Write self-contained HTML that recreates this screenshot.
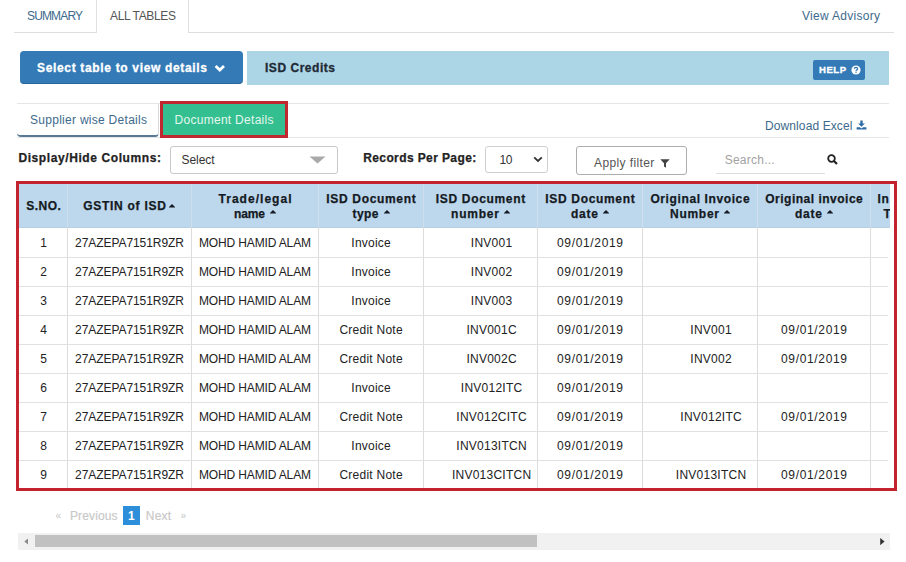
<!DOCTYPE html>
<html><head><meta charset="utf-8"><style>
html,body{margin:0;padding:0;background:#fff;width:906px;height:562px;overflow:hidden;position:relative}
body{font-family:"Liberation Sans",sans-serif}
.t{position:absolute;white-space:nowrap}
.r{position:absolute}
</style></head><body>
<div class="r" style="left:14px;top:32px;width:880px;height:1px;background:#dedede"></div>
<div class="r" style="left:96px;top:0px;width:93px;height:33px;background:#fff;border-left:1px solid #e0e0e0;border-right:1px solid #e0e0e0;box-sizing:border-box"></div>
<div class="t" style="left:27.00px;top:9.34px;font-size:12px;line-height:14px;font-weight:normal;color:#3d6a8c;letter-spacing:-0.850px;">SUMMARY</div>
<div class="t" style="left:110.00px;top:9.34px;font-size:12px;line-height:14px;font-weight:normal;color:#555;letter-spacing:-0.350px;">ALL TABLES</div>
<div class="t" style="left:802.00px;top:9.14px;font-size:12px;line-height:14px;font-weight:normal;color:#3d6a8c;letter-spacing:0.292px;">View Advisory</div>
<div class="r" style="left:20px;top:51px;width:223px;height:33px;background:#337ab7;border-radius:4px;border-bottom:1px solid #2b6496;box-sizing:border-box"></div>
<div class="t" style="left:37.00px;top:60.84px;font-size:12px;line-height:14px;font-weight:bold;color:#fff;letter-spacing:0.665px;-webkit-text-stroke:0.3px #fff;">Select table to view details</div>
<svg class="r" style="left:214px;top:64px" width="12" height="9" viewBox="0 0 12 9"><path d="M1.6 2 L5.8 6.1 L10 2" stroke="#fff" stroke-width="2.8" fill="none"/></svg>
<div class="r" style="left:247px;top:51px;width:642px;height:34px;background:#acd6e5"></div>
<div class="t" style="left:265.00px;top:60.84px;font-size:12px;line-height:14px;font-weight:bold;color:#1e2a36;letter-spacing:0.530px;-webkit-text-stroke:0.3px #1e2a36;">ISD Credits</div>
<div class="r" style="left:813px;top:60px;width:52px;height:20px;background:#337ab7;border-radius:2px"></div>
<div class="t" style="left:819.00px;top:64.21px;font-size:9.5px;line-height:11px;font-weight:bold;color:#fff;letter-spacing:0.550px;-webkit-text-stroke:0.35px #fff;">HELP</div>
<svg class="r" style="left:851px;top:65px" width="10" height="10" viewBox="0 0 10 10"><circle cx="5" cy="5" r="4.6" fill="#fff"/><path d="M3.4 3.9 Q3.5 2.3 5 2.3 Q6.6 2.3 6.6 3.7 Q6.6 4.6 5.6 5 Q5.1 5.3 5.1 6" stroke="#337ab7" stroke-width="1.3" fill="none"/><rect x="4.4" y="6.6" width="1.3" height="1.2" fill="#337ab7"/></svg>
<div class="r" style="left:17px;top:103px;width:872px;height:1px;background:#e6e6e6"></div>
<div class="r" style="left:17px;top:137px;width:872px;height:1px;background:#e6e6e6"></div>
<div class="r" style="left:17px;top:104px;width:142px;height:33px;background:#fff;border-right:1px solid #d8d8d8;border-bottom:2px solid #587a96;border-radius:0 0 4px 4px;box-sizing:border-box"></div>
<div class="t" style="left:30.00px;top:113.14px;font-size:12px;line-height:14px;font-weight:normal;color:#3d6a8c;letter-spacing:0.280px;">Supplier wise Details</div>
<div class="r" style="left:160px;top:101px;width:128px;height:37px;background:#33bf90;border:3px solid #c1272f;box-sizing:border-box"></div>
<div class="t" style="left:174.50px;top:113.14px;font-size:12px;line-height:14px;font-weight:normal;color:#e3f7ee;letter-spacing:0.287px;">Document Details</div>
<div class="t" style="left:765.00px;top:118.84px;font-size:12px;line-height:14px;font-weight:normal;color:#3d6a8c;letter-spacing:0.104px;">Download Excel</div>
<svg class="r" style="left:856px;top:120px" width="11" height="10" viewBox="0 0 11 10"><path d="M4.3 0.6h2.4v3h2.2L5.5 6.8 2.1 3.6h2.2z" fill="#2f6ca6"/><path d="M0.6 7.2h3.3L5.5 8.4 7.1 7.2h3.3v2.4h-9.8z" fill="#2f6ca6"/></svg>
<div class="t" style="left:18.40px;top:150.84px;font-size:12px;line-height:14px;font-weight:bold;color:#222;letter-spacing:0.595px;-webkit-text-stroke:0.25px #222;">Display/Hide Columns:</div>
<div class="r" style="left:170px;top:146px;width:168px;height:28px;background:#fff;border:1px solid #c8c8c8;border-radius:3px;box-sizing:border-box"></div>
<div class="t" style="left:181.50px;top:152.84px;font-size:12px;line-height:14px;font-weight:normal;color:#333;letter-spacing:-0.070px;">Select</div>
<svg class="r" style="left:309px;top:156px" width="17" height="8" viewBox="0 0 17 8"><path d="M0.5 0.5h16L8.5 7.5z" fill="#a9a9a9"/></svg>
<div class="t" style="left:363.20px;top:150.84px;font-size:12px;line-height:14px;font-weight:bold;color:#222;letter-spacing:0.394px;-webkit-text-stroke:0.25px #222;">Records Per Page:</div>
<div class="r" style="left:485px;top:146px;width:63px;height:27px;background:#fff;border:1px solid #cfcfcf;border-radius:3px;box-sizing:border-box"></div>
<div class="t" style="left:499.60px;top:152.84px;font-size:12px;line-height:14px;font-weight:normal;color:#333;letter-spacing:-0.550px;">10</div>
<svg class="r" style="left:533px;top:156px" width="10" height="7" viewBox="0 0 10 7"><path d="M1.2 1.3 L5 5 L8.8 1.3" stroke="#333" stroke-width="1.8" fill="none"/></svg>
<div class="r" style="left:576px;top:146px;width:111px;height:29px;background:#fff;border:1px solid #adadad;border-radius:3px;box-sizing:border-box"></div>
<div class="t" style="left:594.00px;top:155.84px;font-size:12px;line-height:14px;font-weight:normal;color:#555;letter-spacing:0.395px;">Apply filter</div>
<svg class="r" style="left:660px;top:159px" width="10" height="9" viewBox="0 0 10 9"><path d="M0.3 0.3h9.4L6 4.2v4.5L4 7.5V4.2z" fill="#444"/></svg>
<div class="r" style="left:716px;top:173px;width:109px;height:1px;background:#dedede"></div>
<div class="t" style="left:724.70px;top:152.84px;font-size:12px;line-height:14px;font-weight:normal;color:#a2a2a2;letter-spacing:0.244px;">Search...</div>
<svg class="r" style="left:827px;top:153.5px" width="11" height="11" viewBox="0 0 11 11"><circle cx="4.5" cy="4.5" r="3.3" stroke="#222" stroke-width="1.8" fill="none"/><path d="M7 7 L10 10" stroke="#222" stroke-width="2.2"/></svg>
<div class="r" style="left:19px;top:184px;width:871px;height:44px;background:#bdd7ed"></div>
<div class="r" style="left:19px;top:227px;width:871px;height:1px;background:#b6cfe4"></div>
<div class="r" style="left:67px;top:184px;width:1px;height:305px;background:#dcdcdc"></div>
<div class="r" style="left:191px;top:184px;width:1px;height:305px;background:#dcdcdc"></div>
<div class="r" style="left:318px;top:184px;width:1px;height:305px;background:#dcdcdc"></div>
<div class="r" style="left:423px;top:184px;width:1px;height:305px;background:#dcdcdc"></div>
<div class="r" style="left:537px;top:184px;width:1px;height:305px;background:#dcdcdc"></div>
<div class="r" style="left:642px;top:184px;width:1px;height:305px;background:#dcdcdc"></div>
<div class="r" style="left:757px;top:184px;width:1px;height:305px;background:#dcdcdc"></div>
<div class="r" style="left:870px;top:184px;width:1px;height:305px;background:#dcdcdc"></div>
<div class="r" style="left:67px;top:184px;width:1px;height:43px;background:#cfdeec"></div>
<div class="r" style="left:191px;top:184px;width:1px;height:43px;background:#cfdeec"></div>
<div class="r" style="left:318px;top:184px;width:1px;height:43px;background:#cfdeec"></div>
<div class="r" style="left:423px;top:184px;width:1px;height:43px;background:#cfdeec"></div>
<div class="r" style="left:537px;top:184px;width:1px;height:43px;background:#cfdeec"></div>
<div class="r" style="left:642px;top:184px;width:1px;height:43px;background:#cfdeec"></div>
<div class="r" style="left:757px;top:184px;width:1px;height:43px;background:#cfdeec"></div>
<div class="r" style="left:870px;top:184px;width:1px;height:43px;background:#cfdeec"></div>
<div class="r" style="left:19px;top:257px;width:869px;height:1px;background:#e1e1e1"></div>
<div class="r" style="left:19px;top:286px;width:869px;height:1px;background:#e1e1e1"></div>
<div class="r" style="left:19px;top:315px;width:869px;height:1px;background:#e1e1e1"></div>
<div class="r" style="left:19px;top:344px;width:869px;height:1px;background:#e1e1e1"></div>
<div class="r" style="left:19px;top:373px;width:869px;height:1px;background:#e1e1e1"></div>
<div class="r" style="left:19px;top:402px;width:869px;height:1px;background:#e1e1e1"></div>
<div class="r" style="left:19px;top:431px;width:869px;height:1px;background:#e1e1e1"></div>
<div class="r" style="left:19px;top:460px;width:869px;height:1px;background:#e1e1e1"></div>
<div class="t" style="left:-156.24px;top:199.04px;width:400px;text-align:center;font-size:12px;line-height:14px;font-weight:bold;color:#141a22;letter-spacing:0.513px;-webkit-text-stroke:0.25px #141a22;">S.NO.</div>
<div class="t" style="left:-75.13px;top:199.04px;width:400px;text-align:center;font-size:12px;line-height:14px;font-weight:bold;color:#141a22;letter-spacing:0.732px;-webkit-text-stroke:0.25px #141a22;">GSTIN of ISD</div>
<svg class="r" style="left:169px;top:204px" width="6" height="4" viewBox="0 0 6 4"><path d="M-0.3 3.4h6.6L3 0z" fill="#141a22"/></svg>
<div class="t" style="left:55.52px;top:191.84px;width:400px;text-align:center;font-size:12px;line-height:14px;font-weight:bold;color:#141a22;letter-spacing:1.030px;-webkit-text-stroke:0.25px #141a22;">Trade/legal</div>
<div class="t" style="left:171.34px;top:191.84px;width:400px;text-align:center;font-size:12px;line-height:14px;font-weight:bold;color:#141a22;letter-spacing:0.682px;-webkit-text-stroke:0.25px #141a22;">ISD Document</div>
<div class="t" style="left:280.84px;top:191.84px;width:400px;text-align:center;font-size:12px;line-height:14px;font-weight:bold;color:#141a22;letter-spacing:0.682px;-webkit-text-stroke:0.25px #141a22;">ISD Document</div>
<div class="t" style="left:390.34px;top:191.84px;width:400px;text-align:center;font-size:12px;line-height:14px;font-weight:bold;color:#141a22;letter-spacing:0.682px;-webkit-text-stroke:0.25px #141a22;">ISD Document</div>
<div class="t" style="left:500.31px;top:191.84px;width:400px;text-align:center;font-size:12px;line-height:14px;font-weight:bold;color:#141a22;letter-spacing:0.610px;-webkit-text-stroke:0.25px #141a22;">Original Invoice</div>
<div class="t" style="left:614.25px;top:191.84px;width:400px;text-align:center;font-size:12px;line-height:14px;font-weight:bold;color:#141a22;letter-spacing:0.497px;-webkit-text-stroke:0.25px #141a22;">Original invoice</div>
<div class="t" style="left:234.00px;top:207.04px;font-size:12px;line-height:14px;font-weight:bold;color:#141a22;letter-spacing:-0.117px;-webkit-text-stroke:0.25px #141a22;">name</div>
<svg class="r" style="left:270px;top:210px" width="6" height="4" viewBox="0 0 6 4"><path d="M-0.3 3.4h6.6L3 0z" fill="#141a22"/></svg>
<div class="t" style="left:352.50px;top:207.04px;font-size:12px;line-height:14px;font-weight:bold;color:#141a22;letter-spacing:0.433px;-webkit-text-stroke:0.25px #141a22;">type</div>
<svg class="r" style="left:384px;top:210px" width="6" height="4" viewBox="0 0 6 4"><path d="M-0.3 3.4h6.6L3 0z" fill="#141a22"/></svg>
<div class="t" style="left:451.00px;top:207.04px;font-size:12px;line-height:14px;font-weight:bold;color:#141a22;letter-spacing:0.800px;-webkit-text-stroke:0.25px #141a22;">number</div>
<svg class="r" style="left:504px;top:210px" width="6" height="4" viewBox="0 0 6 4"><path d="M-0.3 3.4h6.6L3 0z" fill="#141a22"/></svg>
<div class="t" style="left:571.00px;top:207.04px;font-size:12px;line-height:14px;font-weight:bold;color:#141a22;letter-spacing:0.767px;-webkit-text-stroke:0.25px #141a22;">date</div>
<svg class="r" style="left:603px;top:210px" width="6" height="4" viewBox="0 0 6 4"><path d="M-0.3 3.4h6.6L3 0z" fill="#141a22"/></svg>
<div class="t" style="left:670.00px;top:207.04px;font-size:12px;line-height:14px;font-weight:bold;color:#141a22;letter-spacing:0.730px;-webkit-text-stroke:0.25px #141a22;">Number</div>
<svg class="r" style="left:724px;top:210px" width="6" height="4" viewBox="0 0 6 4"><path d="M-0.3 3.4h6.6L3 0z" fill="#141a22"/></svg>
<div class="t" style="left:795.00px;top:207.04px;font-size:12px;line-height:14px;font-weight:bold;color:#141a22;letter-spacing:0.767px;-webkit-text-stroke:0.25px #141a22;">date</div>
<svg class="r" style="left:827px;top:210px" width="6" height="4" viewBox="0 0 6 4"><path d="M-0.3 3.4h6.6L3 0z" fill="#141a22"/></svg>
<div class="t" style="left:877.50px;top:191.84px;font-size:12px;line-height:14px;font-weight:bold;color:#141a22;letter-spacing:0.600px;-webkit-text-stroke:0.25px #141a22;">In</div>
<div class="t" style="left:883.50px;top:207.04px;font-size:12px;line-height:14px;font-weight:bold;color:#141a22;letter-spacing:0.000px;-webkit-text-stroke:0.25px #141a22;">T</div>
<div class="t" style="left:-156.50px;top:235.74px;width:400px;text-align:center;font-size:12px;line-height:14px;font-weight:normal;color:#222;letter-spacing:0.000px;">1</div>
<div class="t" style="left:-70.53px;top:235.74px;width:400px;text-align:center;font-size:12px;line-height:14px;font-weight:normal;color:#222;letter-spacing:-0.061px;">27AZEPA7151R9ZR</div>
<div class="t" style="left:54.93px;top:235.74px;width:400px;text-align:center;font-size:12px;line-height:14px;font-weight:normal;color:#222;letter-spacing:-0.143px;">MOHD HAMID ALAM</div>
<div class="t" style="left:171.11px;top:235.74px;width:400px;text-align:center;font-size:12px;line-height:14px;font-weight:normal;color:#222;letter-spacing:0.217px;">Invoice</div>
<div class="t" style="left:291.62px;top:235.74px;width:400px;text-align:center;font-size:12px;line-height:14px;font-weight:normal;color:#222;letter-spacing:0.250px;">INV001</div>
<div class="t" style="left:390.33px;top:235.74px;width:400px;text-align:center;font-size:12px;line-height:14px;font-weight:normal;color:#222;letter-spacing:0.661px;">09/01/2019</div>
<div class="t" style="left:-156.50px;top:264.74px;width:400px;text-align:center;font-size:12px;line-height:14px;font-weight:normal;color:#222;letter-spacing:0.000px;">2</div>
<div class="t" style="left:-70.53px;top:264.74px;width:400px;text-align:center;font-size:12px;line-height:14px;font-weight:normal;color:#222;letter-spacing:-0.061px;">27AZEPA7151R9ZR</div>
<div class="t" style="left:54.93px;top:264.74px;width:400px;text-align:center;font-size:12px;line-height:14px;font-weight:normal;color:#222;letter-spacing:-0.143px;">MOHD HAMID ALAM</div>
<div class="t" style="left:171.11px;top:264.74px;width:400px;text-align:center;font-size:12px;line-height:14px;font-weight:normal;color:#222;letter-spacing:0.217px;">Invoice</div>
<div class="t" style="left:291.62px;top:264.74px;width:400px;text-align:center;font-size:12px;line-height:14px;font-weight:normal;color:#222;letter-spacing:0.250px;">INV002</div>
<div class="t" style="left:390.33px;top:264.74px;width:400px;text-align:center;font-size:12px;line-height:14px;font-weight:normal;color:#222;letter-spacing:0.661px;">09/01/2019</div>
<div class="t" style="left:-156.50px;top:293.74px;width:400px;text-align:center;font-size:12px;line-height:14px;font-weight:normal;color:#222;letter-spacing:0.000px;">3</div>
<div class="t" style="left:-70.53px;top:293.74px;width:400px;text-align:center;font-size:12px;line-height:14px;font-weight:normal;color:#222;letter-spacing:-0.061px;">27AZEPA7151R9ZR</div>
<div class="t" style="left:54.93px;top:293.74px;width:400px;text-align:center;font-size:12px;line-height:14px;font-weight:normal;color:#222;letter-spacing:-0.143px;">MOHD HAMID ALAM</div>
<div class="t" style="left:171.11px;top:293.74px;width:400px;text-align:center;font-size:12px;line-height:14px;font-weight:normal;color:#222;letter-spacing:0.217px;">Invoice</div>
<div class="t" style="left:291.62px;top:293.74px;width:400px;text-align:center;font-size:12px;line-height:14px;font-weight:normal;color:#222;letter-spacing:0.250px;">INV003</div>
<div class="t" style="left:390.33px;top:293.74px;width:400px;text-align:center;font-size:12px;line-height:14px;font-weight:normal;color:#222;letter-spacing:0.661px;">09/01/2019</div>
<div class="t" style="left:-156.50px;top:322.74px;width:400px;text-align:center;font-size:12px;line-height:14px;font-weight:normal;color:#222;letter-spacing:0.000px;">4</div>
<div class="t" style="left:-70.53px;top:322.74px;width:400px;text-align:center;font-size:12px;line-height:14px;font-weight:normal;color:#222;letter-spacing:-0.061px;">27AZEPA7151R9ZR</div>
<div class="t" style="left:54.93px;top:322.74px;width:400px;text-align:center;font-size:12px;line-height:14px;font-weight:normal;color:#222;letter-spacing:-0.143px;">MOHD HAMID ALAM</div>
<div class="t" style="left:171.12px;top:322.74px;width:400px;text-align:center;font-size:12px;line-height:14px;font-weight:normal;color:#222;letter-spacing:0.250px;">Credit Note</div>
<div class="t" style="left:291.62px;top:322.74px;width:400px;text-align:center;font-size:12px;line-height:14px;font-weight:normal;color:#222;letter-spacing:0.250px;">INV001C</div>
<div class="t" style="left:390.33px;top:322.74px;width:400px;text-align:center;font-size:12px;line-height:14px;font-weight:normal;color:#222;letter-spacing:0.661px;">09/01/2019</div>
<div class="t" style="left:511.12px;top:322.74px;width:400px;text-align:center;font-size:12px;line-height:14px;font-weight:normal;color:#222;letter-spacing:0.250px;">INV001</div>
<div class="t" style="left:614.33px;top:322.74px;width:400px;text-align:center;font-size:12px;line-height:14px;font-weight:normal;color:#222;letter-spacing:0.661px;">09/01/2019</div>
<div class="t" style="left:-156.50px;top:351.74px;width:400px;text-align:center;font-size:12px;line-height:14px;font-weight:normal;color:#222;letter-spacing:0.000px;">5</div>
<div class="t" style="left:-70.53px;top:351.74px;width:400px;text-align:center;font-size:12px;line-height:14px;font-weight:normal;color:#222;letter-spacing:-0.061px;">27AZEPA7151R9ZR</div>
<div class="t" style="left:54.93px;top:351.74px;width:400px;text-align:center;font-size:12px;line-height:14px;font-weight:normal;color:#222;letter-spacing:-0.143px;">MOHD HAMID ALAM</div>
<div class="t" style="left:171.12px;top:351.74px;width:400px;text-align:center;font-size:12px;line-height:14px;font-weight:normal;color:#222;letter-spacing:0.250px;">Credit Note</div>
<div class="t" style="left:291.62px;top:351.74px;width:400px;text-align:center;font-size:12px;line-height:14px;font-weight:normal;color:#222;letter-spacing:0.250px;">INV002C</div>
<div class="t" style="left:390.33px;top:351.74px;width:400px;text-align:center;font-size:12px;line-height:14px;font-weight:normal;color:#222;letter-spacing:0.661px;">09/01/2019</div>
<div class="t" style="left:511.12px;top:351.74px;width:400px;text-align:center;font-size:12px;line-height:14px;font-weight:normal;color:#222;letter-spacing:0.250px;">INV002</div>
<div class="t" style="left:614.33px;top:351.74px;width:400px;text-align:center;font-size:12px;line-height:14px;font-weight:normal;color:#222;letter-spacing:0.661px;">09/01/2019</div>
<div class="t" style="left:-156.50px;top:380.74px;width:400px;text-align:center;font-size:12px;line-height:14px;font-weight:normal;color:#222;letter-spacing:0.000px;">6</div>
<div class="t" style="left:-70.53px;top:380.74px;width:400px;text-align:center;font-size:12px;line-height:14px;font-weight:normal;color:#222;letter-spacing:-0.061px;">27AZEPA7151R9ZR</div>
<div class="t" style="left:54.93px;top:380.74px;width:400px;text-align:center;font-size:12px;line-height:14px;font-weight:normal;color:#222;letter-spacing:-0.143px;">MOHD HAMID ALAM</div>
<div class="t" style="left:171.11px;top:380.74px;width:400px;text-align:center;font-size:12px;line-height:14px;font-weight:normal;color:#222;letter-spacing:0.217px;">Invoice</div>
<div class="t" style="left:291.62px;top:380.74px;width:400px;text-align:center;font-size:12px;line-height:14px;font-weight:normal;color:#222;letter-spacing:0.250px;">INV012ITC</div>
<div class="t" style="left:390.33px;top:380.74px;width:400px;text-align:center;font-size:12px;line-height:14px;font-weight:normal;color:#222;letter-spacing:0.661px;">09/01/2019</div>
<div class="t" style="left:-156.50px;top:409.74px;width:400px;text-align:center;font-size:12px;line-height:14px;font-weight:normal;color:#222;letter-spacing:0.000px;">7</div>
<div class="t" style="left:-70.53px;top:409.74px;width:400px;text-align:center;font-size:12px;line-height:14px;font-weight:normal;color:#222;letter-spacing:-0.061px;">27AZEPA7151R9ZR</div>
<div class="t" style="left:54.93px;top:409.74px;width:400px;text-align:center;font-size:12px;line-height:14px;font-weight:normal;color:#222;letter-spacing:-0.143px;">MOHD HAMID ALAM</div>
<div class="t" style="left:171.12px;top:409.74px;width:400px;text-align:center;font-size:12px;line-height:14px;font-weight:normal;color:#222;letter-spacing:0.250px;">Credit Note</div>
<div class="t" style="left:291.62px;top:409.74px;width:400px;text-align:center;font-size:12px;line-height:14px;font-weight:normal;color:#222;letter-spacing:0.250px;">INV012CITC</div>
<div class="t" style="left:390.33px;top:409.74px;width:400px;text-align:center;font-size:12px;line-height:14px;font-weight:normal;color:#222;letter-spacing:0.661px;">09/01/2019</div>
<div class="t" style="left:511.12px;top:409.74px;width:400px;text-align:center;font-size:12px;line-height:14px;font-weight:normal;color:#222;letter-spacing:0.250px;">INV012ITC</div>
<div class="t" style="left:614.33px;top:409.74px;width:400px;text-align:center;font-size:12px;line-height:14px;font-weight:normal;color:#222;letter-spacing:0.661px;">09/01/2019</div>
<div class="t" style="left:-156.50px;top:438.74px;width:400px;text-align:center;font-size:12px;line-height:14px;font-weight:normal;color:#222;letter-spacing:0.000px;">8</div>
<div class="t" style="left:-70.53px;top:438.74px;width:400px;text-align:center;font-size:12px;line-height:14px;font-weight:normal;color:#222;letter-spacing:-0.061px;">27AZEPA7151R9ZR</div>
<div class="t" style="left:54.93px;top:438.74px;width:400px;text-align:center;font-size:12px;line-height:14px;font-weight:normal;color:#222;letter-spacing:-0.143px;">MOHD HAMID ALAM</div>
<div class="t" style="left:171.11px;top:438.74px;width:400px;text-align:center;font-size:12px;line-height:14px;font-weight:normal;color:#222;letter-spacing:0.217px;">Invoice</div>
<div class="t" style="left:291.62px;top:438.74px;width:400px;text-align:center;font-size:12px;line-height:14px;font-weight:normal;color:#222;letter-spacing:0.250px;">INV013ITCN</div>
<div class="t" style="left:390.33px;top:438.74px;width:400px;text-align:center;font-size:12px;line-height:14px;font-weight:normal;color:#222;letter-spacing:0.661px;">09/01/2019</div>
<div class="t" style="left:-156.50px;top:467.74px;width:400px;text-align:center;font-size:12px;line-height:14px;font-weight:normal;color:#222;letter-spacing:0.000px;">9</div>
<div class="t" style="left:-70.53px;top:467.74px;width:400px;text-align:center;font-size:12px;line-height:14px;font-weight:normal;color:#222;letter-spacing:-0.061px;">27AZEPA7151R9ZR</div>
<div class="t" style="left:54.93px;top:467.74px;width:400px;text-align:center;font-size:12px;line-height:14px;font-weight:normal;color:#222;letter-spacing:-0.143px;">MOHD HAMID ALAM</div>
<div class="t" style="left:171.12px;top:467.74px;width:400px;text-align:center;font-size:12px;line-height:14px;font-weight:normal;color:#222;letter-spacing:0.250px;">Credit Note</div>
<div class="t" style="left:291.62px;top:467.74px;width:400px;text-align:center;font-size:12px;line-height:14px;font-weight:normal;color:#222;letter-spacing:0.250px;">INV013CITCN</div>
<div class="t" style="left:390.33px;top:467.74px;width:400px;text-align:center;font-size:12px;line-height:14px;font-weight:normal;color:#222;letter-spacing:0.661px;">09/01/2019</div>
<div class="t" style="left:511.12px;top:467.74px;width:400px;text-align:center;font-size:12px;line-height:14px;font-weight:normal;color:#222;letter-spacing:0.250px;">INV013ITCN</div>
<div class="t" style="left:614.33px;top:467.74px;width:400px;text-align:center;font-size:12px;line-height:14px;font-weight:normal;color:#222;letter-spacing:0.661px;">09/01/2019</div>
<div class="r" style="left:890px;top:184px;width:3px;height:305px;background:#fff"></div>
<div class="r" style="left:16px;top:181px;width:881px;height:310px;border:3px solid #c3222f;box-sizing:border-box"></div>
<div class="t" style="left:55.50px;top:510.03px;font-size:10px;line-height:12px;font-weight:normal;color:#c4c4c4;letter-spacing:0.000px;">«</div>
<div class="t" style="left:70.00px;top:509.04px;font-size:12px;line-height:14px;font-weight:normal;color:#c8c8c8;letter-spacing:0.114px;-webkit-text-stroke:0.15px #c8c8c8;">Previous</div>
<div class="r" style="left:123px;top:506px;width:17px;height:19px;background:#2d8fd9"></div>
<div class="t" style="left:128.00px;top:509.04px;font-size:12px;line-height:14px;font-weight:bold;color:#fff;letter-spacing:0.000px;">1</div>
<div class="t" style="left:145.80px;top:509.04px;font-size:12px;line-height:14px;font-weight:normal;color:#c8c8c8;letter-spacing:0.233px;-webkit-text-stroke:0.15px #c8c8c8;">Next</div>
<div class="t" style="left:180.50px;top:510.03px;font-size:10px;line-height:12px;font-weight:normal;color:#c4c4c4;letter-spacing:0.000px;">»</div>
<div class="r" style="left:18px;top:533px;width:872px;height:17px;background:#f1f1f1"></div>
<div class="r" style="left:35px;top:535px;width:502px;height:12px;background:#c1c1c1"></div>
<svg class="r" style="left:24px;top:538px" width="5" height="7" viewBox="0 0 5 7"><path d="M4 0.5L0.3 3.5 4 6.5z" fill="#8a8a8a"/></svg>
<svg class="r" style="left:880px;top:537.5px" width="5" height="7" viewBox="0 0 5 7"><path d="M0.2 0L4.6 3.6 0.2 7.2z" fill="#333"/></svg>
</body></html>
